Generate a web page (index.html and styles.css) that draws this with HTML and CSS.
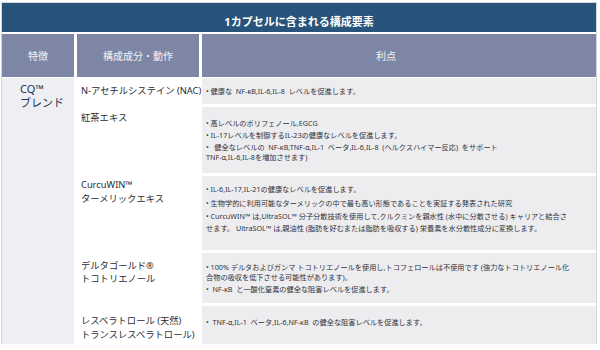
FILE: index.html
```html
<!DOCTYPE html>
<html lang="ja">
<head>
<meta charset="utf-8">
<link rel="stylesheet" href="styles.css">
</head>
<body>
<div class="frame">
  <div class="title">1カプセルに含まれる構成要素</div>
  <div class="head">
    <div class="hcell">特徴</div>
    <div class="hcell">構成成分・動作</div>
    <div class="hcell">利点</div>
  </div>
  <div class="body">
    <div class="feature">CQ™<br>ブレンド</div>

    <div class="ing ing-mid">N-アセチルシステイン (NAC)</div>
    <ul class="ben">
      <li>•&nbsp;健康な&nbsp; NF-κB,IL-6,IL-8&nbsp; レベルを促進します。</li>
    </ul>

    <div class="ing ing-r2">紅茶エキス</div>
    <ul class="ben">
      <li>•&nbsp;高レベルのポリフェノール,EGCG</li>
      <li>•&nbsp;IL-17レベルを制御するIL-23の健康なレベルを促進します。</li>
      <li>•&nbsp;&nbsp; 健全なレベルの&nbsp; NF-κB,TNF-α,IL-1&nbsp; ベータ,IL-6,IL-8&nbsp; (ヘルクスハイマー反応)&nbsp; をサポート<br>TNF-α,IL-6,IL-8を増加させます)</li>
    </ul>

    <div class="ing ing-r3">CurcuWIN™<br>ターメリックエキス</div>
    <ul class="ben ben-wide">
      <li>•&nbsp;IL-6,IL-17,IL-21の健康なレベルを促進します。</li>
      <li>•&nbsp;生物学的に利用可能なターメリックの中で最も高い形態であることを実証する発表された研究</li>
      <li>•&nbsp;CurcuWIN™ は,UltraSOL™ 分子分散技術を使用して,クルクミンを親水性 (水中に分散させる) キャリアと結合さ<br>せます。 UltraSOL™ は,親油性 (脂肪を好むまたは脂肪を吸収する) 栄養素を水分散性成分に変換します。</li>
    </ul>

    <div class="ing ing-r4">デルタゴールド®<br>トコトリエノール</div>
    <ul class="ben">
      <li>•&nbsp;100% デルタおよびガンマ トコトリエノールを使用し,トコフェロールは不使用です (強力なトコトリエノール化<br>合物の吸収を低下させる可能性があります)。</li>
      <li>•&nbsp;&nbsp;NF-κB&nbsp; と一酸化窒素の健全な阻害レベルを促進します。</li>
    </ul>

    <div class="ing ing-r5">レスベラトロール (天然)<br>トランスレスベラトロール)</div>
    <ul class="ben ben-last">
      <li>•&nbsp;&nbsp;TNF-α,IL-1&nbsp; ベータ,IL-6,NF-κB&nbsp; の健全な阻害レベルを促進します。</li>
    </ul>
  </div>
</div>
</body>
</html>
```
FILE: styles.css
```css
* { box-sizing: border-box; }
html, body { margin: 0; padding: 0; background: #ffffff; }
body {
  width: 600px;
  height: 350px;
  overflow: hidden;
  font-family: "Noto Sans", "Noto Sans CJK JP", sans-serif;
}
.frame {
  margin: 2px 3px 0 1px;
  border: 1px solid #d3d6dc;
  border-bottom: none;
  background: #ffffff;
}
.title {
  height: 29px;
  background: #28547b;
  color: #ffffff;
  font-size: 11px;
  font-weight: 700;
  line-height: 14px;
  padding-top: 12px;
  text-align: center;
}
.head {
  margin-top: 2px;
  display: grid;
  grid-template-columns: 72px 122px 1fr;
  column-gap: 3px;
  height: 43px;
}
.hcell {
  background: #7d87a5;
  color: #f4f5f8;
  font-size: 10px;
  display: flex;
  align-items: center;
  justify-content: center;
}
.hcell:last-child { padding-right: 26px; }
.body {
  margin-top: 1px;
  display: grid;
  grid-template-columns: 72px 122px 1fr;
  grid-template-rows: 26px 66px 74px 50px 38px;
  column-gap: 3px;
  row-gap: 3px;
}
.feature {
  grid-column: 1;
  grid-row: 1 / span 5;
  background: #eeeff2;
  color: #1e2f4f;
  font-size: 11px;
  font-weight: 400;
  line-height: 14px;
  padding: 4px 0 0 18px;
}
.ing {
  grid-column: 2;
  color: #2a2c33;
  font-size: 9.3px;
  line-height: 13.5px;
  padding-left: 4px;
  white-space: nowrap;
}
.ing-mid { align-self: center; }
.ing-r2 { padding-top: 4px; }
.ing-r3 { padding-top: 2px; }
.ing-r4 { padding-top: 7px; line-height: 12.5px; }
.ing-r5 { padding-top: 8px; }
.ben {
  grid-column: 3;
  list-style: none;
  margin: 0;
  padding: 0 8px 0 4px;
  background: #ededf0;
  color: #303238;
  font-size: 7.2px;
  line-height: 10px;
  display: flex;
  flex-direction: column;
  justify-content: center;
  gap: 2px;
  white-space: nowrap;
}
.ben-wide { line-height: 11.5px; gap: 2px; padding-bottom: 8px; }
.ben-last { padding-bottom: 6px; }
```
